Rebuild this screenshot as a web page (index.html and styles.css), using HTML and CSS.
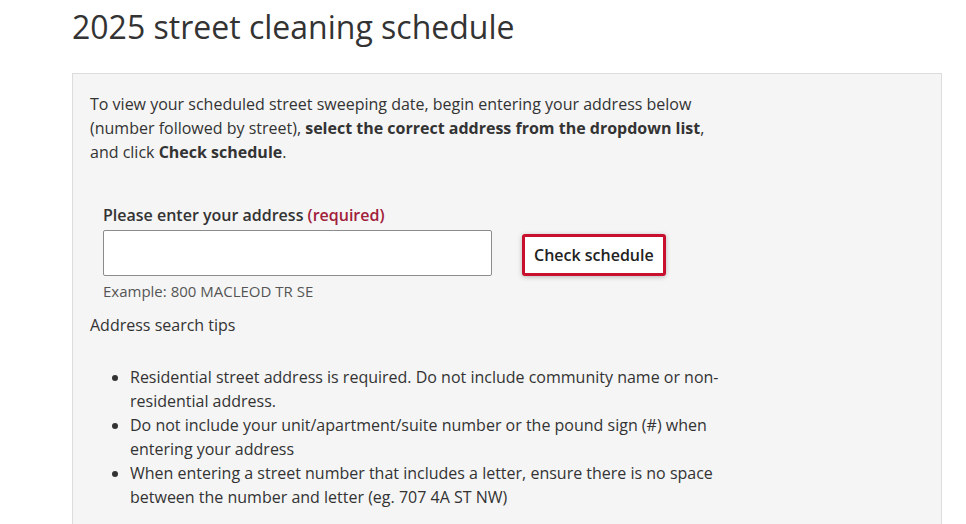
FILE: index.html
```html
<!DOCTYPE html>
<html lang="en">
<head>
<meta charset="utf-8">
<title>2025 street cleaning schedule</title>
<link rel="stylesheet" href="styles.css">
</head>
<body>
<main class="page">
  <h1 class="title">2025 street cleaning schedule</h1>
  <section class="panel">
    <p class="intro">To view your scheduled street sweeping date, begin entering your address below (number followed by street), <strong>select the correct address from the dropdown list</strong>, and click <strong>Check schedule</strong>.</p>
    <form class="form">
      <label class="label" for="addr">Please enter your address <span class="req">(required)</span></label>
      <div class="row">
        <input class="input" id="addr" type="text">
        <button class="btn" type="button">Check schedule</button>
      </div>
      <div class="hint">Example: 800 MACLEOD TR SE</div>
    </form>
    <p class="tips-title">Address search tips</p>
    <ul class="tips">
      <li>Residential street address is required. Do not include community name or non-residential address.</li>
      <li>Do not include your unit/apartment/suite number or the pound sign (#) when entering your address</li>
      <li>When entering a street number that includes a letter, ensure there is no space between the number and letter (eg. 707 4A ST NW)</li>
    </ul>
  </section>
</main>
</body>
</html>
```
FILE: styles.css
```css
html, body {
  margin: 0;
  padding: 0;
  background: #fff;
}
body {
  font-family: "Open Sans", "Liberation Sans", sans-serif;
  color: #333;
  font-size: 16px;
  line-height: 24px;
}
.page {
  padding-left: 72px;
}
.title {
  margin: 0;
  padding-top: 6px;
  font-size: 32px;
  line-height: 42px;
  font-weight: 400;
  color: #333;
}
.panel {
  margin-top: 25px;
  width: 834px;
  background: #f5f5f5;
  border: 1px solid #dcdcdc;
  padding: 18px 17px 30px;
}
.intro {
  margin: 0;
  max-width: 640px;
}
.intro strong {
  font-weight: 700;
}
.form {
  margin: 39px 0 0 13px;
}
.label {
  display: block;
  font-weight: 600;
  color: #333;
  margin-bottom: 3px;
}
.req {
  color: #a1203a;
}
.row {
  display: flex;
  align-items: flex-end;
  gap: 30px;
}
.input {
  box-sizing: border-box;
  width: 389px;
  height: 46px;
  border: 1px solid #8c8c8c;
  border-radius: 2px;
  background: #fff;
  margin: 0;
  font: inherit;
}
.btn {
  box-sizing: border-box;
  height: 42px;
  padding: 0 9px;
  border: 3px solid #c8102e;
  border-radius: 3px;
  background: #fff;
  color: #222;
  font-family: inherit;
  font-size: 16px;
  font-weight: 600;
  box-shadow: 0 1px 5px rgba(0,0,0,0.25);
  margin: 0;
}
.hint {
  margin-top: 4px;
  font-size: 15px;
  line-height: 22px;
  color: #555;
}
.tips-title {
  margin: 11px 0 0;
}
.tips {
  margin: 28px 0 0;
  padding-left: 40px;
  max-width: 600px;
}
```
